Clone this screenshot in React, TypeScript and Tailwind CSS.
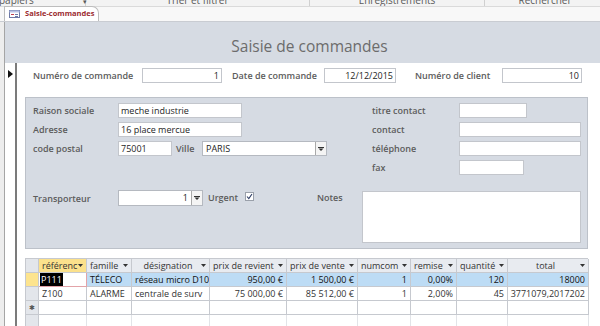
import React from "react";

const Arrow = () => (
  <svg width="5" height="3" viewBox="0 0 5 3" className="shrink-0">
    <path d="M0 0 L5 0 L2.5 3 Z" fill="#333" />
  </svg>
);

const DropBtn = () => (
  <div className="w-[11px] h-full bg-[#f4f4f4] border-l border-[#a9a9a9] flex items-center justify-center shrink-0">
    <svg width="6" height="4" viewBox="0 0 6 4">
      <rect x="0" y="0" width="6" height="1" fill="#333" />
      <path d="M0.5 1.5 L5.5 1.5 L3 4 Z" fill="#333" />
    </svg>
  </div>
);

function Input({ w, value, right, h = "h-[15px]" }: { w: string; value?: string; right?: boolean; h?: string }) {
  return (
    <div
      className={`${w} ${h} bg-white border border-[#c3c6cc] shrink-0 flex items-center px-[2px] text-[9px] text-[#1e1e1e] ${
        right ? "justify-end" : "justify-start"
      }`}
    >
      {value}
    </div>
  );
}

function Label({ w, children, cls = "" }: { w: string; children: React.ReactNode; cls?: string }) {
  return <div className={`${w} ${cls} shrink-0 text-[9px] font-semibold text-[#5c5c5c] leading-[15px] whitespace-nowrap`}>{children}</div>;
}

const head = [
  { t: "référenc", a: "left", bg: "bg-[#fbe18c]" },
  { t: "famille", a: "left" },
  { t: "désignation", a: "center" },
  { t: "prix de revient", a: "left" },
  { t: "prix de vente", a: "left" },
  { t: "numcom", a: "left" },
  { t: "remise", a: "left" },
  { t: "quantité", a: "left" },
  { t: "total", a: "center" },
];

const rows = [
  ["P111", "TÉLECO", "réseau micro D10", "950,00 €", "1 500,00 €", "1", "0,00%", "120", "18000"],
  ["Z100", "ALARME", "centrale de surv", "75 000,00 €", "85 512,00 €", "1", "2,00%", "45", "3771079,2017202"],
];
const rightCols = [3, 4, 5, 6, 7, 8];

export default function App() {
  return (
    <div className="w-[600px] h-[326px] overflow-hidden bg-white flex flex-col font-['Open_Sans','Noto_Sans',sans-serif]">
      {/* ribbon remnants */}
      <div className="h-[7px] bg-[#f3f3f3] border-b border-[#dadada] overflow-hidden flex text-[10px] leading-[10px] text-[#5a5a5a] shrink-0">
        <div className="w-[86px] -mt-[5px] flex items-start shrink-0 border-r border-[#d0d0d0]">
          <span className="-ml-[1px]">papiers</span>
          <span className="ml-[49px] text-[7px] mt-[2px]">▾</span>
        </div>
        <div className="w-[224px] -mt-[5px] text-center shrink-0 border-r border-[#d0d0d0]">Trier et filtrer</div>
        <div className="w-[175px] -mt-[5px] text-center shrink-0 border-r border-[#d0d0d0]">Enregistrements</div>
        <div className="w-[120px] -mt-[5px] text-center shrink-0">Rechercher</div>
      </div>
      {/* tab row */}
      <div className="h-[15px] bg-[#f8f8f8] border-b border-[#c9ccd2] flex items-end pl-[4px] shrink-0">
        <div className="h-[15px] w-[95px] bg-white border border-b-0 border-[#bdbdbd] rounded-tr-[7px] flex items-center pl-[4px] gap-[5px] whitespace-nowrap">
          <svg width="11" height="8" viewBox="0 0 11 8" className="shrink-0">
            <rect x="0.5" y="0.5" width="10" height="7" fill="#fff" stroke="#6e7aa6" />
            <rect x="0.5" y="0.5" width="10" height="2" fill="#b9c3e6" />
            <rect x="2" y="4" width="3" height="1" fill="#c23b4a" />
            <rect x="6" y="4" width="3" height="1" fill="#6e7aa6" />
            <rect x="6" y="6" width="3" height="1" fill="#6e7aa6" />
          </svg>
          <span className="text-[7.5px] font-bold text-[#9b2b30] leading-none">Saisie-commandes</span>
        </div>
      </div>
      {/* main */}
      <div className="flex flex-1 min-h-0">
        <div className="w-[5px] bg-[#ededed] border-r border-[#a5a5a5] shrink-0" />
        <div className="flex-1 flex flex-col min-w-0">
          {/* form header */}
          <div className="h-[41px] bg-[#d6dbe3] flex items-center justify-center pl-[14px] pt-[9px] shrink-0">
            <span className="text-[15.5px] text-[#6c6c6c] leading-none">Saisie de commandes</span>
          </div>
          {/* detail */}
          <div className="flex flex-1 min-h-0">
            <div className="w-[12px] bg-white border-r-2 border-[#7b7b7b] shrink-0 flex justify-center pt-[7px]">
              <svg width="5" height="8" viewBox="0 0 5 8">
                <path d="M0 0 L5 4 L0 8 Z" fill="#111" />
              </svg>
            </div>
            <div className="flex-1 flex flex-col min-w-0">
              {/* top row */}
              <div className="mt-[5px] h-[15px] flex items-center">
                <Label w="w-[109px]" cls="ml-[16px]">Numéro de commande</Label>
                <Input w="w-[80px]" value="1" right />
                <Label w="w-[92px]" cls="ml-[10px]">Date de commande</Label>
                <Input w="w-[72px]" value="12/12/2015" right />
                <Label w="w-[87px]" cls="ml-[19px]">Numéro de client</Label>
                <Input w="w-[80px]" value="10" right />
              </div>
              {/* panel */}
              <div className="mt-[14px] ml-[8px] w-[563px] h-[152px] bg-[#d6dbe3] border border-[#bcc1c9] flex flex-col shrink-0">
                <div className="flex pt-[5px]">
                  <div className="w-[346px] pl-[7px] flex flex-col gap-[4px] shrink-0">
                    <div className="flex h-[15px]">
                      <Label w="w-[85px]">Raison sociale</Label>
                      <Input w="w-[124px]" value="meche industrie" />
                    </div>
                    <div className="flex h-[15px]">
                      <Label w="w-[85px]">Adresse</Label>
                      <Input w="w-[124px]" value="16 place mercue" />
                    </div>
                    <div className="flex h-[15px]">
                      <Label w="w-[85px]">code postal</Label>
                      <Input w="w-[54px]" value="75001" />
                      <Label w="w-[26px]" cls="ml-[4px]">Ville</Label>
                      <div className="w-[125px] h-[15px] bg-white border border-[#b5b9c0] flex shrink-0">
                        <div className="flex-1 text-[9px] text-[#1e1e1e] pl-[3px] leading-[13px]">PARIS</div>
                        <DropBtn />
                      </div>
                    </div>
                  </div>
                  <div className="flex flex-col gap-[4px]">
                    <div className="flex h-[15px]">
                      <Label w="w-[87px]">titre contact</Label>
                      <Input w="w-[68px]" />
                    </div>
                    <div className="flex h-[15px]">
                      <Label w="w-[87px]">contact</Label>
                      <Input w="w-[122px]" />
                    </div>
                    <div className="flex h-[15px]">
                      <Label w="w-[87px]">téléphone</Label>
                      <Input w="w-[122px]" />
                    </div>
                    <div className="flex h-[15px]">
                      <Label w="w-[87px]">fax</Label>
                      <Input w="w-[65px]" />
                    </div>
                  </div>
                </div>
                <div className="flex mt-[15px] pl-[7px] items-start">
                  <Label w="w-[85px]" cls="mt-[1px]">Transporteur</Label>
                  <div className="w-[85px] h-[16px] bg-white border border-[#b5b9c0] flex shrink-0">
                    <div className="flex-1 text-[9px] text-[#1e1e1e] pr-[3px] text-right leading-[14px]">1</div>
                    <DropBtn />
                  </div>
                  <Label w="w-[37px]" cls="ml-[5px]">Urgent</Label>
                  <div className="w-[9px] h-[9px] mt-[2px] bg-white border border-[#9aa0aa] flex items-center justify-center shrink-0">
                    <svg width="7" height="7" viewBox="0 0 7 7">
                      <path d="M1 3.5 L2.8 5.5 L6 1" fill="none" stroke="#2b3a63" strokeWidth="1.1" />
                    </svg>
                  </div>
                  <Label w="w-[45px]" cls="ml-[63px]">Notes</Label>
                  <div className="w-[219px] h-[52px] mt-[1px] bg-white border border-[#c3c6cc] shrink-0" />
                </div>
              </div>
              {/* datasheet */}
              <div className="mt-[9px] ml-[8px] w-[563px] border-l border-t border-[#c6c9cf] shrink-0 text-[9px] leading-[13px]">
                <div className="grid grid-cols-[13px_48px_45px_78px_77px_71px_53px_46px_51px_81px]">
                  <div className="h-[14px] bg-[#e3e6eb] border-r border-b border-[#c6c9cf]" />
                  {head.map((h, i) => (
                    <div
                      key={i}
                      className={`h-[14px] ${h.bg ?? "bg-[#e8ebf0]"} border-r border-b border-[#c6c9cf] flex items-center pl-[3px] pr-[3px] text-[#333] overflow-hidden whitespace-nowrap`}
                    >
                      <span className={h.a === "center" ? "flex-1 text-center" : "flex-1"}>{h.t}</span>
                      <Arrow />
                    </div>
                  ))}
                  {rows.map((r, ri) => (
                    <React.Fragment key={ri}>
                      <div
                        className={`h-[14px] border-r border-b border-[#c6c9cf] ${
                          ri === 0 ? "bg-[#fde48e]" : "bg-[#e3e6eb]"
                        }`}
                      />
                      {r.map((c, ci) => {
                        const isSel = ri === 0 && ci === 0;
                        const base = ri === 0 ? "bg-[#bddcf5] text-[#111] font-medium" : "bg-white text-[#333]";
                        return (
                          <div
                            key={ci}
                            className={`h-[14px] border-r border-b flex items-center overflow-hidden whitespace-nowrap px-[3px] ${
                              isSel ? "bg-white border-[#e3a3a8]" : `${base} border-[#c6c9cf]`
                            } ${rightCols.includes(ci) ? "justify-end" : "justify-start"}`}
                          >
                            {isSel ? <span className="bg-black text-white px-[1px] -ml-[2px]">{c}</span> : c}
                          </div>
                        );
                      })}
                    </React.Fragment>
                  ))}
                  <div className="h-[14px] bg-[#e3e6eb] border-r border-b border-[#c6c9cf] flex items-center justify-center text-[7px] text-[#555]">
                    ✱
                  </div>
                  {Array.from({ length: 9 }).map((_, i) => (
                    <div key={i} className="h-[14px] bg-white border-r border-b border-[#c6c9cf]" />
                  ))}
                  <div className="h-[14px] bg-[#e3e6eb] border-r border-[#c6c9cf]" />
                  {Array.from({ length: 9 }).map((_, i) => (
                    <div key={i} className="h-[14px] bg-white border-r border-[#e2e4e8]" />
                  ))}
                </div>
              </div>
            </div>
          </div>
        </div>
      </div>
    </div>
  );
}
